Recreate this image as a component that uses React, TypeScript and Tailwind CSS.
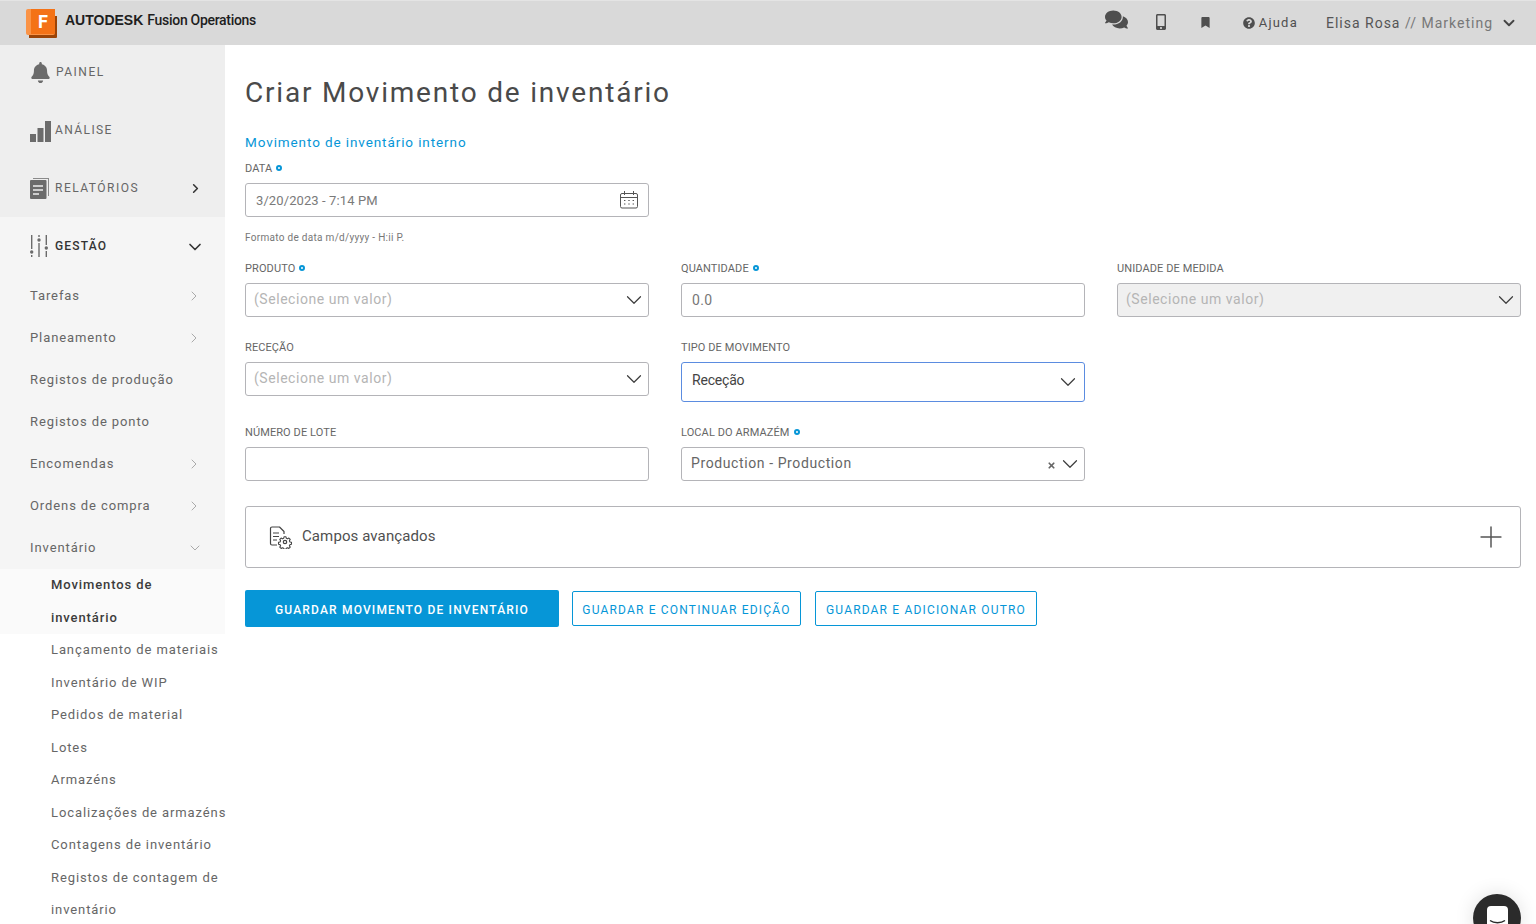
import { ChevronDown, ChevronRight, Plus, X } from "lucide-react";
import { FaBell, FaBookmark, FaComments, FaMobileAlt, FaQuestionCircle } from "react-icons/fa";

const subItems = [
  { label: "Tarefas", arrow: true },
  { label: "Planeamento", arrow: true },
  { label: "Registos de produção" },
  { label: "Registos de ponto" },
  { label: "Encomendas", arrow: true },
  { label: "Ordens de compra", arrow: true },
];

const inventoryItems = [
  "Lançamento de materiais",
  "Inventário de WIP",
  "Pedidos de material",
  "Lotes",
  "Armazéns",
  "Localizações de armazéns",
  "Contagens de inventário",
];

function BarsIcon() {
  return (
    <svg width="21" height="21" viewBox="0 0 21 21" fill="#6b6b6b" className="mt-[2px]">
      <rect x="0" y="13" width="6" height="8" />
      <rect x="7.5" y="7" width="6" height="14" />
      <rect x="15" y="0" width="6" height="21" />
    </svg>
  );
}

function ReportsIcon() {
  return (
    <svg width="19" height="21" viewBox="0 0 19 21">
      <path d="M3 0h16v18h-1V1H3z" fill="#8a8a8a" />
      <rect x="0" y="2" width="16.5" height="19" rx="1" fill="#6b6b6b" />
      <path d="M3 8h10M3 12h10M3 16h6" stroke="#eeeeee" strokeWidth="1.4" />
    </svg>
  );
}

function SlidersIcon() {
  return (
    <svg width="18" height="22" viewBox="0 0 18 22" fill="#6b6b6b">
      <rect x="1" y="0" width="1.4" height="14" />
      <circle cx="1.7" cy="17" r="1.7" />
      <rect x="1" y="20" width="1.4" height="2" />
      <rect x="8.3" y="0" width="1.4" height="2" />
      <circle cx="9" cy="5" r="1.7" />
      <rect x="8.3" y="8" width="1.4" height="14" />
      <rect x="15.6" y="0" width="1.4" height="10" />
      <circle cx="16.3" cy="13" r="1.7" />
      <rect x="15.6" y="16" width="1.4" height="6" />
    </svg>
  );
}

function CalendarIcon() {
  return (
    <svg width="20" height="20" viewBox="0 0 20 20" fill="none" stroke="#555" strokeWidth="1">
      <rect x="1.5" y="3.5" width="17" height="14.5" rx="1.5" />
      <path d="M1.5 7.5h17M5.5 1v4M14.5 1v4" />
      <path d="M5 10.5h1.4M9.3 10.5h1.4M13.6 10.5h1.4M5 14h1.4M9.3 14h1.4M13.6 14h1.4" strokeWidth="1.2" />
    </svg>
  );
}

function AdvancedIcon() {
  return (
    <svg width="24" height="24" viewBox="0 0 24 24" fill="none" stroke="#444" strokeWidth="1.2" strokeLinejoin="round">
      <path d="M8 20H3a1.5 1.5 0 0 1-1.5-1.5V3.5A1.5 1.5 0 0 1 3 2h7.5L15 6.5V9" />
      <path d="M4 8h6M4 11.5h6M4 15h4" />
      <circle cx="16" cy="17" r="1.7" />
      {/* gear outline */}
      <path d="M14.9 11.2h2.2l.4 1.7 1.3.6 1.5-.9 1.5 1.5-.9 1.5.6 1.3 1.7.4v2.2l-1.7.4-.6 1.3.9 1.5-1.5 1.5-1.5-.9-1.3.6-.4 1.2h-2.2l-.4-1.2-1.3-.6-1.5.9-1.5-1.5.9-1.5-.6-1.3-1.7-.4v-2.2l1.7-.4.6-1.3-.9-1.5 1.5-1.5 1.5.9 1.3-.6z" transform="translate(1.6 1.7) scale(0.9)" />
    </svg>
  );
}

function Required() {
  return <span className="ml-[4px] inline-block h-[6px] w-[6px] rounded-full border-[2px] border-[#0696d7]" />;
}

function Field({ label, required, children }: { label: string; required?: boolean; children: React.ReactNode }) {
  return (
    <div>
      <label className="flex h-[22px] items-start text-[11px] leading-[15px] tracking-[0.1px] text-[#666666]">
        {label}
        {required && <span className="mt-[4px] flex"><Required /></span>}
      </label>
      {children}
    </div>
  );
}

function SelectBox({ value, disabled }: { value?: string; disabled?: boolean }) {
  return (
    <div
      className={`flex h-[34px] items-center justify-between rounded-[3px] border border-[#b4b4b8] pl-[8px] pr-[1px] text-[14px] tracking-[0.55px] text-[#b5b5b5] ${
        disabled ? "bg-[#f0f0f0]" : "bg-white"
      }`}
    >
      <span className="pb-[2px]">{value}</span>
      <ChevronDown size={26} strokeWidth={1.1} className="text-[#3c3c3c]" />
    </div>
  );
}

export default function App() {
  return (
    <div className="flex h-screen flex-col overflow-hidden bg-white font-['Roboto',sans-serif]">
      <header className="flex h-[45px] shrink-0 items-center border-t border-[#e4e4e4] bg-[#d9d9d9] pl-[26px]">
        <div className="relative h-[29px] w-[31px]">
          <div className="absolute left-[3px] top-[7px] h-[22px] w-[28px] rounded-br-[1px] bg-[#9c4407]" />
          <div className="absolute left-0 top-0 h-[26px] w-[29px] rounded-[2px] bg-[#fa9346]" />
          <div className="absolute left-[5px] top-0 h-[25px] w-[24px] bg-[#f47216]" />
          <span className="absolute left-[12px] top-[3px] text-[18px] font-bold leading-[20px] text-white">F</span>
        </div>
        <div className="ml-[8px] -mt-[5px] flex items-center whitespace-nowrap text-[#1e1e1e]">
          <span className="font-['Liberation_Sans',sans-serif] text-[14px] font-bold">AUTODESK</span>
          <span className="ml-[4px] text-[14px] font-medium tracking-[-0.3px]">Fusion Operations</span>
        </div>
        <div className="ml-auto flex items-center text-[#4f4f4f]">
          <FaComments size={23} className="-mt-[7px]" />
          <FaMobileAlt size={16} className="-mt-[2px] ml-[25px]" />
          <FaBookmark size={11} className="-mt-[2px] ml-[31px]" />
          <FaQuestionCircle size={12} className="ml-[32px]" />
          <span className="ml-[4px] text-[13px] tracking-[1.2px]">Ajuda</span>
          <span className="ml-[28px] whitespace-nowrap text-[14px] tracking-[1px] text-[#555555]">
            Elisa Rosa <span className="text-[#777777]">// Marketing</span>
          </span>
          <ChevronDown size={18} strokeWidth={2.5} className="ml-[7px] mr-[18px] text-[#444444]" />
        </div>
      </header>

      <div className="flex min-h-0 flex-1">
        <aside className="w-[225px] shrink-0 whitespace-nowrap">
          <div className="bg-[#eeeeee] pb-[1px] text-[12px] tracking-[1.5px] text-[#666666]">
            <div className="flex h-[55px] items-center pb-[1px] pl-[30px]">
              <FaBell size={21} className="text-[#6b6b6b]" />
              <span className="ml-[5px]">PAINEL</span>
            </div>
            <div className="flex h-[58px] items-center pt-[2px] pl-[30px]">
              <BarsIcon />
              <span className="ml-[4px] tracking-[1.4px]">ANÁLISE</span>
            </div>
            <div className="flex h-[58px] items-center pt-[2px] pl-[30px] pr-[22px]">
              <ReportsIcon />
              <span className="ml-[6px]">RELATÓRIOS</span>
              <ChevronRight size={15} strokeWidth={2.5} className="ml-auto text-[#333333]" />
            </div>
          </div>
          <div className="bg-[#f5f5f5] pb-[1px] text-[13px] tracking-[0.9px] text-[#666666]">
            <div className="flex h-[57px] items-center pl-[30px] pr-[20px] text-[12px] font-medium tracking-[1.2px] text-[#333333]">
              <SlidersIcon />
              <span className="ml-[7px]">GESTÃO</span>
              <ChevronDown size={20} strokeWidth={2} className="ml-auto mt-[2px]" />
            </div>
            {subItems.map((item) => (
              <div key={item.label} className="flex h-[42px] items-center pl-[30px] pr-[23px] pt-[2px]">
                <span>{item.label}</span>
                {item.arrow && <ChevronRight size={16} strokeWidth={1.5} className="ml-auto text-[#aaaaaa]" />}
              </div>
            ))}
            <div className="flex h-[42px] items-center pl-[30px] pr-[22px] pt-[2px]">
              <span>Inventário</span>
              <ChevronDown size={16} strokeWidth={1.5} className="ml-auto text-[#aaaaaa]" />
            </div>
          </div>
          <div className="text-[13px] leading-[32.5px] tracking-[0.9px] text-[#666666]">
            <div className="bg-[#fafafa] pl-[51px] font-medium text-[#3c3c3c]">
              Movimentos de
              <br />
              inventário
            </div>
            {inventoryItems.map((item) => (
              <div key={item} className="pl-[51px]">
                {item}
              </div>
            ))}
            <div className="pl-[51px]">
              Registos de contagem de
              <br />
              inventário
            </div>
          </div>
        </aside>

        <main className="min-w-0 flex-1 pl-[20px] pr-[15px] pt-[30px]">
          <h1 className="text-[28px] font-normal leading-[36px] tracking-[1.8px] text-[#4a4a4a]">
            Criar Movimento de inventário
          </h1>
          <p className="mb-[10px] mt-[22px] text-[13.5px] leading-[18px] tracking-[0.9px] text-[#0696d7]">
            Movimento de inventário interno
          </p>

          <div className="w-[404px]">
            <Field label="DATA" required>
              <div className="flex h-[34px] items-center justify-between rounded-[3px] border border-[#b4b4b8] pl-[10px] pr-[9px] text-[13px] tracking-[0.1px] text-[#7a7a7a]">
                <span className="pt-[2px]">3/20/2023 - 7:14 PM</span>
                <CalendarIcon />
              </div>
            </Field>
            <p className="mb-[16px] mt-[14px] h-[14px] text-[10px] leading-[14px] tracking-[0.3px] text-[#777777]">
              Formato de data m/d/yyyy - H:ii P.
            </p>
          </div>

          <div className="grid grid-cols-3 items-start gap-x-[32px] gap-y-[23px]">
            <Field label="PRODUTO" required>
              <SelectBox value="(Selecione um valor)" />
            </Field>
            <Field label="QUANTIDADE" required>
              <div className="flex h-[34px] items-center rounded-[3px] border border-[#b4b4b8] pl-[10px] text-[14px] tracking-[0.4px] text-[#777777]">
                0.0
              </div>
            </Field>
            <Field label="UNIDADE DE MEDIDA">
              <SelectBox value="(Selecione um valor)" disabled />
            </Field>

            <Field label="RECEÇÃO">
              <SelectBox value="(Selecione um valor)" />
            </Field>
            <Field label="TIPO DE MOVIMENTO">
              <div className="flex h-[40px] items-center justify-between rounded-[3px] border border-[#5b8ce0] pl-[10px] pr-[3px] text-[14px] tracking-[-0.2px] text-[#444444]">
                <span className="pb-[3px]">Receção</span>
                <ChevronDown size={26} strokeWidth={1.1} className="text-[#3c3c3c]" />
              </div>
            </Field>
            <div />

            <Field label="NÚMERO DE LOTE">
              <div className="h-[34px] rounded-[3px] border border-[#b4b4b8]" />
            </Field>
            <Field label="LOCAL DO ARMAZÉM" required>
              <div className="flex h-[34px] items-center rounded-[3px] border border-[#b4b4b8] pl-[9px] pr-[1px] text-[14px] tracking-[0.6px] text-[#666666]">
                <span className="pb-[2px]">Production - Production</span>
                <X size={9} strokeWidth={4.5} className="ml-auto mr-[1px] mt-[2px] text-[#666666]" />
                <ChevronDown size={26} strokeWidth={1.1} className="text-[#3c3c3c]" />
              </div>
            </Field>
          </div>

          <div className="mt-[25px] flex h-[62px] items-center rounded-[3px] border border-[#b4b4b8] pl-[23px] pr-[12px]">
            <AdvancedIcon />
            <span className="ml-[9px] pb-[2px] text-[15px] tracking-[0.1px] text-[#4f4f4f]">Campos avançados</span>
            <Plus size={34} strokeWidth={1.05} className="ml-auto text-[#555555]" />
          </div>

          <div className="mt-[22px] flex items-center whitespace-nowrap text-[12px] tracking-[1.17px]">
            <button className="h-[37px] w-[314px] rounded-[2px] bg-[#0696d7] pt-[2px] font-medium text-white">
              GUARDAR MOVIMENTO DE INVENTÁRIO
            </button>
            <button className="ml-[13px] h-[35px] w-[229px] rounded-[2px] border border-[#0696d7] pt-[2px] text-[#0696d7]">
              GUARDAR E CONTINUAR EDIÇÃO
            </button>
            <button className="ml-[14px] h-[35px] w-[222px] rounded-[2px] border border-[#0696d7] pt-[2px] text-[#0696d7]">
              GUARDAR E ADICIONAR OUTRO
            </button>
          </div>
        </main>
      </div>

      {/* chat launcher, cut off by the bottom of the window */}
      <div className="fixed left-[1473px] top-[894px] flex h-[48px] w-[48px] justify-center rounded-full bg-[#2b2b2b] pt-[12px] shadow-[0_0_20px_rgba(0,0,0,0.12)]">
        <svg width="21" height="22" viewBox="0 0 21 22">
          <rect width="21" height="22" rx="4" fill="#fff" />
          <path d="M3 14.5c4 3 11 3 15 0" fill="none" stroke="#2b2b2b" strokeWidth="1.5" />
        </svg>
      </div>
    </div>
  );
}
